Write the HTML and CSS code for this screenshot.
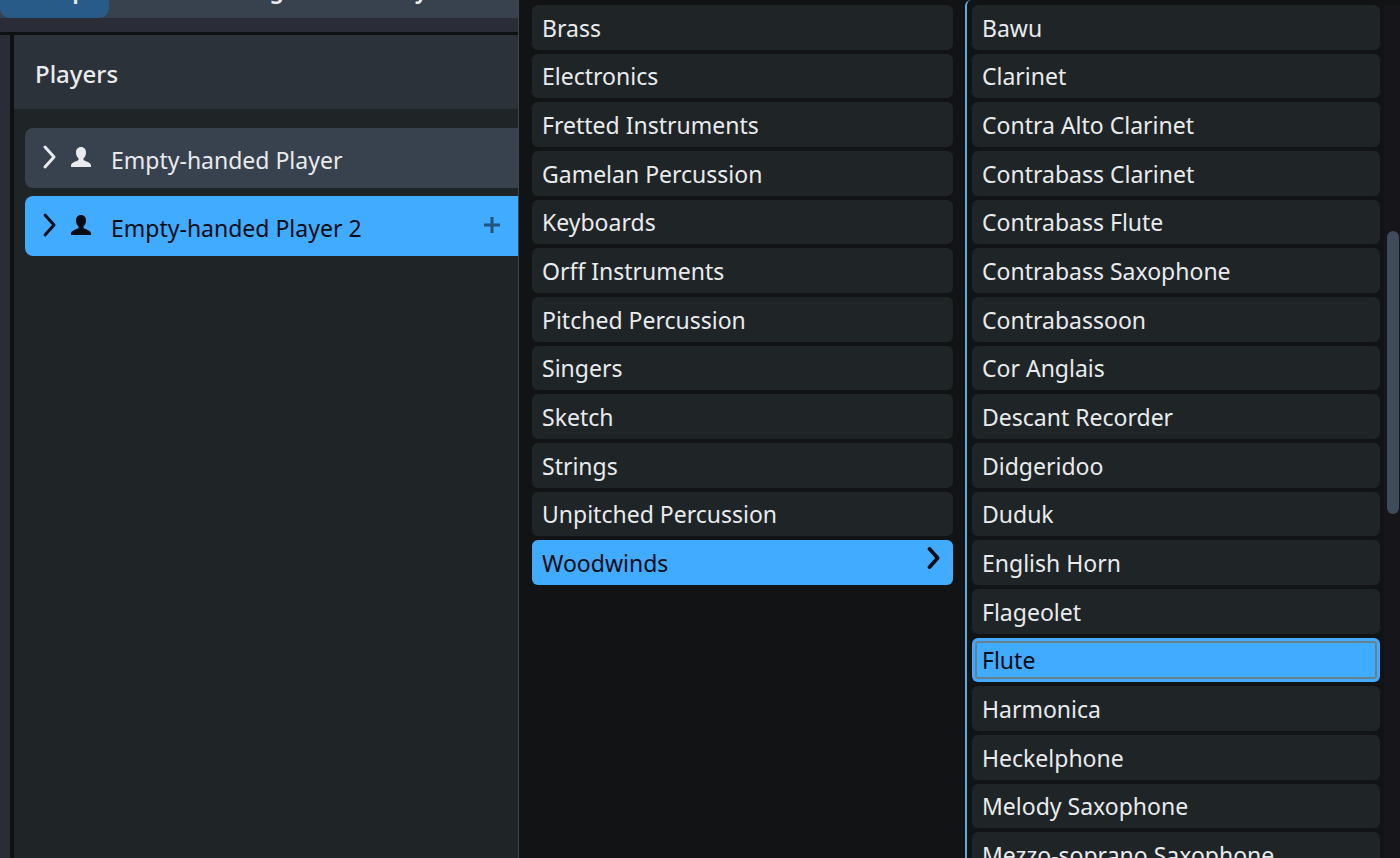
FILE: index.html
```
<!DOCTYPE html>
<html lang="en">
    <head>
        <meta charset="utf-8">
        <title>Players</title>
        <link rel="stylesheet" href="styles.css">
    </head>
    <body>
        <div class="app">
            <div class="sidebar">
                <div class="toolbar">
                    <nav class="modes">
                        <button class="mode active">Setup</button>
                        <button class="mode">Write</button>
                        <button class="mode">Engrave</button>
                        <button class="mode">Play</button>
                    </nav>
                </div>
                <div class="workspace">
                    <div class="rail"></div>
                    <section class="players">
                        <h1 class="players-title">Players</h1>
                        <div class="players-list">
                            <div class="player">
                                <svg class="chevron" viewBox="0 0 14 24"><path d="M2 2l9 10-9 10"/></svg>
                                <svg class="person" viewBox="0 0 20 20"><path d="M10 0C6.800 0 5 2.300 5 5.400c0 2.600 1 4.700 2.500 5.900v1.500C7.300 14.300 0 14.800 0 18.700V20h20v-1.300c0-3.900-7.300-4.400-7.500-5.900v-1.500C14 10.100 15 8 15 5.400 15 2.300 13.200 0 10 0z"/></svg>
                                <span class="player-name">Empty-handed Player</span>
                            </div>
                            <div class="player selected">
                                <svg class="chevron" viewBox="0 0 14 24"><path d="M2 2l9 10-9 10"/></svg>
                                <svg class="person" viewBox="0 0 20 20"><path d="M10 0C6.800 0 5 2.300 5 5.400c0 2.600 1 4.700 2.500 5.900v1.500C7.300 14.300 0 14.800 0 18.700V20h20v-1.300c0-3.900-7.300-4.400-7.500-5.900v-1.500C14 10.100 15 8 15 5.400 15 2.300 13.200 0 10 0z"/></svg>
                                <span class="player-name">Empty-handed Player 2</span>
                                <button class="add" aria-label="Add instrument">
                                    <svg viewBox="0 0 16 16"><path d="M8 0v16M0 8h16"/></svg>
                                </button>
                            </div>
                        </div>
                    </section>
                </div>
            </div>
            <div class="picker">
                <div class="column families">
                    <div class="list">
                        <button class="item">Brass</button>
                        <button class="item">Electronics</button>
                        <button class="item">Fretted Instruments</button>
                        <button class="item">Gamelan Percussion</button>
                        <button class="item">Keyboards</button>
                        <button class="item">Orff Instruments</button>
                        <button class="item">Pitched Percussion</button>
                        <button class="item">Singers</button>
                        <button class="item">Sketch</button>
                        <button class="item">Strings</button>
                        <button class="item">Unpitched Percussion</button>
                        <button class="item selected">Woodwinds
                            <svg class="chevron" viewBox="0 0 14 24"><path d="M2 2l9 10-9 10"/></svg>
                        </button>
                    </div>
                </div>
                <div class="column instruments">
                    <div class="list">
                        <button class="item">Bawu</button>
                        <button class="item">Clarinet</button>
                        <button class="item">Contra Alto Clarinet</button>
                        <button class="item">Contrabass Clarinet</button>
                        <button class="item">Contrabass Flute</button>
                        <button class="item">Contrabass Saxophone</button>
                        <button class="item">Contrabassoon</button>
                        <button class="item">Cor Anglais</button>
                        <button class="item">Descant Recorder</button>
                        <button class="item">Didgeridoo</button>
                        <button class="item">Duduk</button>
                        <button class="item">English Horn</button>
                        <button class="item">Flageolet</button>
                        <button class="item selected focused">Flute</button>
                        <button class="item">Harmonica</button>
                        <button class="item">Heckelphone</button>
                        <button class="item">Melody Saxophone</button>
                        <button class="item">Mezzo-soprano Saxophone</button>
                    </div>
                    <div class="scrollbar"><div class="thumb"></div></div>
                </div>
            </div>
        </div>
    </body>
</html>
```
FILE: styles.css
```
* {
    box-sizing: border-box;
}
body {
    margin: 0;
    overflow: hidden;
    background-color: #121315;
    color: #e9ebed;
    font-family: "Noto Sans", "Open Sans", sans-serif;
    font-size: 23px;
    line-height: 32px;
}
button {
    margin: 0;
    border: 0;
    padding: 0;
    background: none;
    color: inherit;
    font: inherit;
}
svg {
    flex: none;
    display: block;
    overflow: visible;
}
.app {
    display: flex;
    height: 100vh;
}

/* left side */
.sidebar {
    display: flex;
    flex-direction: column;
    width: 37%;
    box-sizing: content-box;
    border-right: 1px solid #3b434d;
}
.toolbar {
    background-color: #2a2d37;
    border-bottom: 3px solid #0f1012;
    padding-bottom: 14px;
}
.modes {
    display: flex;
    align-items: flex-end;
    height: 18px;
    overflow: hidden;
    background-color: #38424e;
}
.mode {
    flex: none;
    padding: 0 24px 13px;
    font-weight: 600;
}
.mode.active {
    width: 109px;
    padding: 0 20px 13px;
    background-color: #285b87;
    border-radius: 10px;
}
.workspace {
    display: flex;
    flex: 1;
}
.rail {
    width: 14px;
    background-color: #2a2d37;
    border-right: 4px solid #0f1012;
}
.players {
    flex: 1;
    background-color: #1f2427;
}
.players-title {
    margin: 0;
    padding: 23px 21px 19px;
    background-color: #2c3239;
    font-size: 24px;
    font-weight: 500;
    line-height: 32px;
}
.players-list {
    display: flex;
    flex-direction: column;
    gap: 8px;
    padding: 19px 0 0 11px;
}
.player {
    display: flex;
    align-items: center;
    height: 60px;
    padding: 0 18px 2px;
    background-color: #38424e;
    border-radius: 8px 0 0 8px;
}
.player-name {
    flex: 1;
    padding-top: 6px;
}
.chevron {
    width: 14px;
    height: 24px;
    fill: none;
    stroke: currentColor;
    stroke-width: 3;
    stroke-linecap: round;
    stroke-linejoin: round;
}
.person {
    width: 20px;
    height: 20px;
    margin: 0 20px 0 14px;
    fill: currentColor;
}
.add svg {
    width: 16px;
    height: 16px;
    stroke: #1f557f;
    stroke-width: 3;
}
.selected {
    background-color: #40abff;
    color: #040c14;
}

/* instrument picker */
.picker {
    display: flex;
    flex: 1;
    overflow: hidden;
}
.column {
    padding-top: 5px;
}
.families {
    width: 446px;
    padding-left: 13px;
    padding-right: 12px;
}
.instruments {
    display: flex;
    flex: 1;
    padding-left: 5px;
    border-left: 2px solid #58aee2;
    border-top-left-radius: 6px;
}
.list {
    display: grid;
    flex: 1;
    grid-template-rows: repeat(18, minmax(40px, 1fr));
    gap: 4px;
    height: calc(100vh + 14px);
}
.item {
    display: flex;
    align-items: center;
    justify-content: space-between;
    padding: 1px 12px 0 10px;
    background-color: #1f2427;
    border-radius: 6px;
    text-align: left;
}
.item.selected {
    background-color: #40abff;
}
.item .chevron {
    height: 22px;
    margin-bottom: 10px;
    stroke-width: 4;
}
.focused {
    outline: 2px solid #66818f;
    outline-offset: -5px;
}
.scrollbar {
    width: 16px;
    margin-left: 4px;
    padding: 226px 1px 0 3px;
    background-color: #15151a;
}
.thumb {
    height: 283px;
    background-color: #3e4b59;
    border-radius: 6px;
}
```
